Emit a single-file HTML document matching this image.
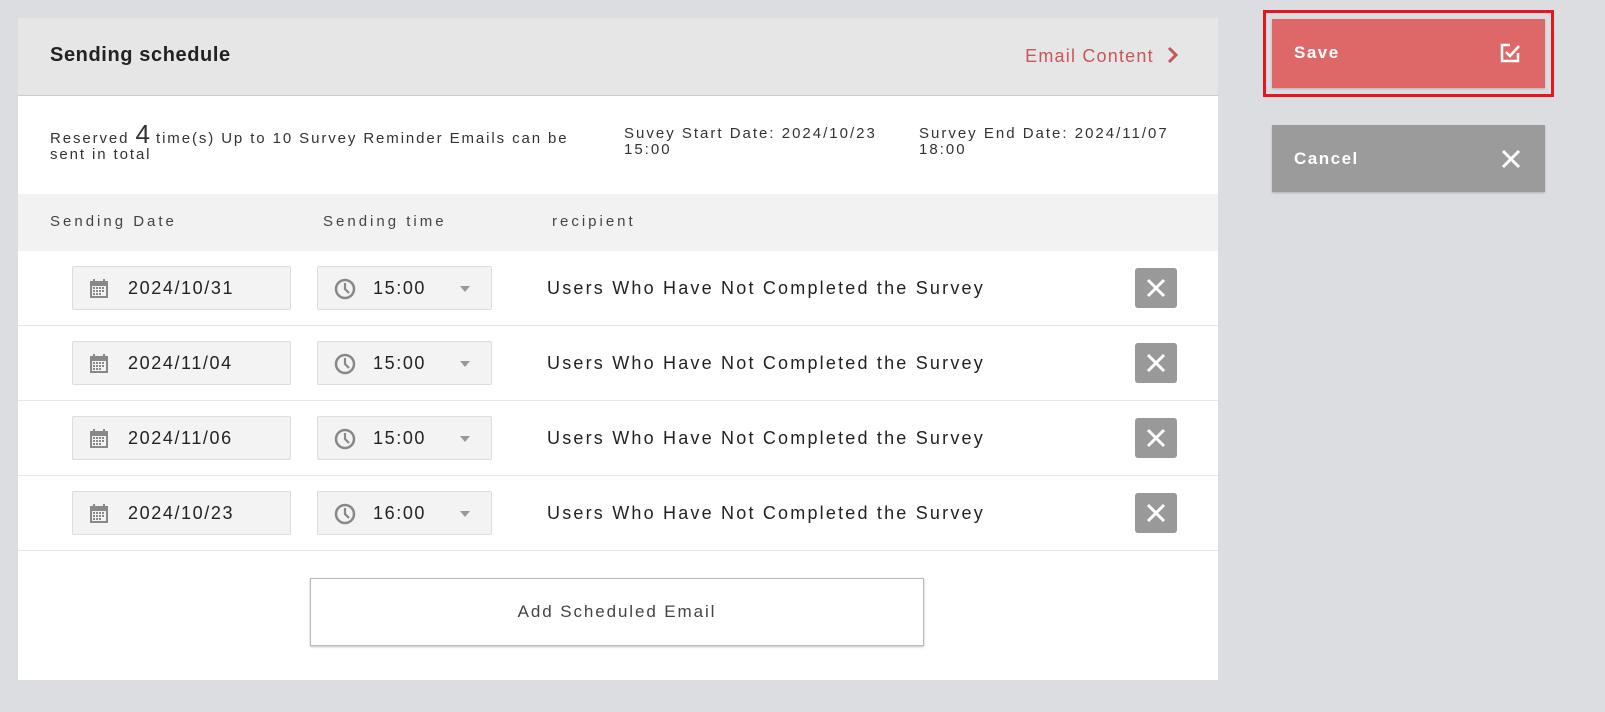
<!DOCTYPE html>
<html><head><meta charset="utf-8"><style>
*{box-sizing:border-box;margin:0;padding:0}
body{width:1605px;height:712px;background:#dcdde1;font-family:"Liberation Sans",sans-serif;position:relative;overflow:hidden;color:#333}
.panel{position:absolute;left:18px;top:18px;width:1200px;height:662px;background:#fff}
.hdr{height:78px;background:#e6e6e6;border-bottom:1px solid #ccc;position:relative}
.hdr h1{position:absolute;left:32px;top:26px;font-size:20px;font-weight:bold;color:#222;letter-spacing:.6px}
.hdr .ec{position:absolute;right:38px;top:28px;font-size:18px;color:#c9565a;letter-spacing:1.2px}
.info{position:absolute;top:108px;font-size:15px;letter-spacing:2px;line-height:16px;color:#333}
.th{position:absolute;left:0;top:176px;width:1200px;height:57px;background:#f2f2f2;font-size:15px;letter-spacing:3px;color:#444}
.th span{position:absolute;top:19px}
.row{position:absolute;left:0;width:1200px;height:75px;border-bottom:1px solid #e8e8e8}
.f{position:absolute;top:15px;height:44px;background:#f3f3f3;border:1px solid #ddd;border-radius:2px;font-size:18px;letter-spacing:1.6px;color:#222}
.f .t{position:absolute;top:11px}
.rc{position:absolute;left:529px;top:27px;font-size:18px;letter-spacing:2.2px;color:#222}
.del{position:absolute;left:1117px;top:17px;width:42px;height:40px;background:#999;border-radius:3px}
.add{position:absolute;left:292px;top:560px;width:614px;height:68px;border:1px solid #bbb;box-shadow:0 1px 2px rgba(0,0,0,.25);text-align:center;line-height:66px;font-size:17px;letter-spacing:1.9px;color:#444}
.btn{position:absolute;left:1272px;width:273px;color:#fff;font-size:17px;font-weight:bold;letter-spacing:1.5px;box-shadow:0 1px 2px rgba(0,0,0,.2)}
</style></head><body>
<div class="panel">
<div class="hdr"><h1>Sending schedule</h1><div class="ec">Email Content <svg width="14" height="18" viewBox="0 0 14 18" style="margin-left:6px;vertical-align:-2px"><path d="M3 2l7 7-7 7" stroke="#c9565a" stroke-width="3" fill="none"/></svg></div></div>
<div class="info" style="left:32px;top:108px;letter-spacing:1.9px">Reserved <span style="font-size:26px;letter-spacing:0">4</span> time(s) Up to 10 Survey Reminder Emails can be<br>sent in total</div>
<div class="info" style="left:606px">Suvey Start Date: 2024/10/23<br>15:00</div>
<div class="info" style="left:901px">Survey End Date: 2024/11/07<br>18:00</div>
<div class="th"><span style="left:32px">Sending Date</span><span style="left:305px">Sending time</span><span style="left:534px">recipient</span></div>
<div id="rows"></div>
<div class="add">Add Scheduled Email</div>
</div>
<div style="position:absolute;left:1263px;top:10px;width:291px;height:87px;border:3px solid #e8141e"></div>
<div class="btn" style="top:19px;height:69px;background:#de6868"><span style="position:absolute;left:22px;top:24px">Save</span>
<svg style="position:absolute;left:228px;top:24px" width="22" height="20" viewBox="0 0 22 20"><path d="M10 2H2v16h16v-8" stroke="#fff" stroke-width="2.5" fill="none"/><path d="M6 9l4 4 9-10" stroke="#fff" stroke-width="2.5" fill="none"/></svg></div>
<div class="btn" style="top:125px;height:67px;background:#9b9b9b"><span style="position:absolute;left:22px;top:24px">Cancel</span>
<svg style="position:absolute;left:229px;top:24px" width="20" height="20" viewBox="0 0 20 20"><path d="M2 2l16 16M18 2L2 18" stroke="#fff" stroke-width="3"/></svg></div>
<script>
var d=[["2024/10/31","15:00"],["2024/11/04","15:00"],["2024/11/06","15:00"],["2024/10/23","16:00"]],h="";
d.forEach(function(r,i){h+='<div class="row" style="top:'+(233+i*75)+'px"><div class="f" style="left:54px;width:219px"><svg style="position:absolute;left:16px;top:11px" width="20" height="21" viewBox="0 0 20 21"><rect x="1" y="3" width="18" height="17" fill="#888"/><rect x="3" y="8" width="14" height="10" fill="#f3f3f3"/><g fill="#888"><rect x="4" y="9" width="2" height="2"/><rect x="7" y="9" width="2" height="2"/><rect x="10" y="9" width="2" height="2"/><rect x="13" y="9" width="2" height="2"/><rect x="4" y="12" width="2" height="2"/><rect x="7" y="12" width="2" height="2"/><rect x="10" y="12" width="2" height="2"/><rect x="13" y="12" width="2" height="2"/><rect x="4" y="15" width="2" height="2"/><rect x="7" y="15" width="2" height="2"/><rect x="10" y="15" width="2" height="2"/></g><rect x="4" y="1" width="2" height="4" fill="#888"/><rect x="14" y="1" width="2" height="4" fill="#888"/></svg><span class="t" style="left:55px">'+r[0]+'</span></div><div class="f" style="left:299px;width:175px"><svg style="position:absolute;left:16px;top:11px" width="22" height="22" viewBox="0 0 22 22"><circle cx="11" cy="11" r="9" stroke="#888" stroke-width="2.5" fill="none"/><path d="M11 5v6l4 4" stroke="#888" stroke-width="2.2" fill="none"/></svg><span class="t" style="left:55px">'+r[1]+'</span><svg style="position:absolute;left:142px;top:19px" width="10" height="6"><path d="M0 0h10L5 6z" fill="#999"/></svg></div><div class="rc">Users Who Have Not Completed the Survey</div><div class="del"><svg style="position:absolute;left:11px;top:10px" width="20" height="20" viewBox="0 0 20 20"><path d="M2 2l16 16M18 2L2 18" stroke="#fff" stroke-width="3"/></svg></div></div>'});
document.getElementById("rows").innerHTML=h;
</script>
</body></html>
